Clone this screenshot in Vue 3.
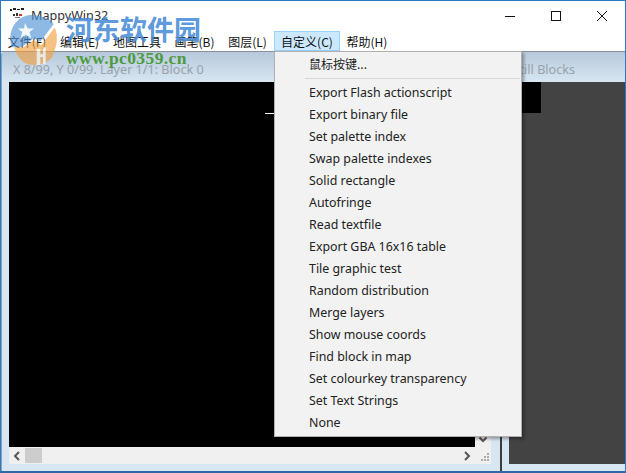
<script setup>
const menus = [
  { label: '文件(F)', w: 52 },
  { label: '编辑(E)', w: 53 },
  { label: '地图工具', w: 62 },
  { label: '画笔(B)', w: 53 },
  { label: '图层(L)', w: 53 },
  { label: '自定义(C)', w: 66, active: true },
  { label: '帮助(H)', w: 54 }
]
const items = ['Export Flash actionscript','Export binary file','Set palette index','Swap palette indexes','Solid rectangle','Autofringe','Read textfile','Export GBA 16x16 table','Tile graphic test','Random distribution','Merge layers','Show mouse coords','Find block in map','Set colourkey transparency','Set Text Strings','None']
</script>

<template>
  <div class="win">
    <div class="titlebar">
      <svg class="appicon" width="16" height="16" viewBox="0 0 16 16"><path d="M0 1h2v2H0zM3 0h3v2H3zM7 1h3v1H7zM11 0h3v2h-3z" fill="#222"/><path d="M3 6h2v2H3zM6 5h2v3H6z" fill="#333"/><path d="M9 6h3v2H9z" fill="#c33"/><path d="M5 9h5v1H5z" fill="#777"/></svg>
      <span class="title">MappyWin32</span>
      <div class="caption">
        <svg class="capbtn" viewBox="0 0 46 30"><path d="M18 15.5h10" stroke="#111" fill="none"/></svg>
        <svg class="capbtn" viewBox="0 0 46 30"><rect x="18.5" y="10.5" width="9" height="9" stroke="#111" fill="none"/></svg>
        <svg class="capbtn" viewBox="0 0 46 30"><path d="M18 10l10 10M28 10L18 20" stroke="#111" fill="none"/></svg>
      </div>
    </div>
    <div class="menubar">
      <div v-for="m in menus" :key="m.label" class="mi" :class="{ active: m.active }" :style="{ width: m.w + 'px' }">{{ m.label }}</div>
    </div>
    <div class="client">
      <div class="mdi left">
        <div class="mdihead">X 8/99, Y 0/99. Layer 1/1: Block 0</div>
        <div class="canvas">
          <div class="canvasbody"><div class="cursor"></div></div>
          <div class="vscroll"><svg width="10" height="8" viewBox="0 0 10 8"><path d="M1.5 1.5L5 5l3.5-3.5" stroke="#555" stroke-width="2" fill="none"/></svg></div>
        </div>
        <div class="hscroll">
          <svg width="16" height="16" viewBox="0 0 16 16"><path d="M10 4L6 8l4 4" stroke="#555" stroke-width="2" fill="none"/></svg>
          <div class="thumb"></div>
          <div class="spacer"></div>
          <svg width="16" height="16" viewBox="0 0 16 16"><path d="M6 4l4 4-4 4" stroke="#555" stroke-width="2" fill="none"/></svg>
          <svg class="grip" width="16" height="16" viewBox="0 0 16 16"><path d="M12 5h2v2h-2zM9 8h2v2H9zM12 8h2v2h-2zM6 11h2v2H6zM9 11h2v2H9zM12 11h2v2h-2z" fill="#aaa"/></svg>
        </div>
      </div>
      <div class="mdi right">
        <div class="mdihead rhead"><span>Still Blocks</span></div>
        <div class="graypane"><div class="tile"></div></div>
      </div>
    </div>
    <div class="dropdown">
      <div class="dditem cjk">鼠标按键...</div>
      <div class="sep"></div>
      <div v-for="i in items" :key="i" class="dditem">{{ i }}</div>
    </div>
    <div class="watermark">
      <svg class="wmlogo" width="54" height="50" viewBox="0 0 60 56" preserveAspectRatio="none">
        <path d="M26 0C38 0 47 4 52 10L37 30 30 26 16 36 5 36C0 18 10 1 26 0z" fill="#4e92d6" opacity=".85"/>
        <path d="M20 9l3 6 7 0-5 4 2 7-6-4-6 4 2-7-5-4 7 0z" fill="#fff" opacity=".9"/>
        <path d="M8 36l10 0 12-8 8 6 15-20c3 6 3 16 1 22l-4 12C46 53 38 56 30 56 18 56 11 47 8 36z" fill="#f0a040" opacity=".85"/>
        <path d="M33 38h4v18h-4zM40 36h3v19h-3zM36 44h6v3h-6z" fill="#fff" opacity=".85"/>
      </svg>
      <div class="wmcn">河东软件园</div>
      <div class="wmurl">www.pc0359.cn</div>
    </div>
  </div>
</template>

<style>
html, body { margin: 0; padding: 0; overflow: hidden; }
</style>

<style scoped>
.win { position: relative; width: 626px; height: 473px; box-sizing: border-box; border: 1px solid #2b79c2; border-bottom: 2px solid #2b6ca8; background: #cfe2f3; font-family: "Noto Sans", "Noto Sans CJK SC", sans-serif; display: flex; flex-direction: column; overflow: hidden; }
.titlebar { height: 29px; background: #fff; display: flex; align-items: center; flex: none; }
.appicon { margin-left: 9px; margin-top: 1px; }
.title { margin-left: 5px; font-size: 12.6px; color: #333; }
.caption { margin-left: auto; display: flex; }
.capbtn { width: 46px; height: 30px; }
.menubar { height: 21px; background: #fff; display: flex; font: 12px "Noto Sans CJK SC", sans-serif; border-bottom: 1px solid #8a9097; flex: none; color: #111; }
.mi { display: flex; align-items: center; justify-content: center; box-sizing: border-box; margin-top: 1px; }
.mi.active { background: #cce8ff; border: 1px solid #99d1ff; }
.client { flex: 1; display: flex; min-height: 0; background: #d9e8f5; }
.mdi { display: flex; flex-direction: column; min-height: 0; background: linear-gradient(#b6c9db, #d8e6f2 30px); }
.left { width: 500px; padding: 0 9px 0 7px; box-sizing: border-box; border-right: 1px solid #3c3c3c; border-left: 1px solid #8fa3b5; border-top-left-radius: 4px; }
.right { flex: 1; padding-left: 7px; border-left: 1px solid #3c3c3c; }
.mdihead { height: 30px; font-size: 12.6px; color: #98a2ab; line-height: 36px; white-space: nowrap; padding-left: 4px; flex: none; }
.rhead { padding: 0; text-align: right; padding-right: 50px; }
.canvas { flex: 1; display: flex; min-height: 0; }
.canvasbody { flex: 1; background: #000; position: relative; }
.cursor { position: absolute; left: 256px; top: 31px; width: 10px; height: 1px; background: #fff; }
.vscroll { width: 16px; background: #f0f0f0; display: flex; align-items: flex-end; justify-content: center; padding-bottom: 3px; box-sizing: border-box; }
.hscroll { height: 17px; background: #f0f0f0; display: flex; align-items: center; flex: none; margin-bottom: 7px; }
.thumb { width: 17px; height: 15px; background: #cdcdcd; }
.spacer { flex: 1; }
.graypane { flex: 1; background: #434343; margin-bottom: 7px; }
.tile { width: 32px; height: 31px; background: #000; }
.dropdown { position: absolute; left: 273px; top: 50px; width: 248px; height: 386px; box-sizing: border-box; background: #f2f2f2; border: 1px solid #b0b0b0; box-shadow: 2px 2px 3px rgba(0,0,0,.35); padding-top: 1px; font-size: 12.4px; color: #222; }
.dditem { height: 22px; line-height: 22px; padding-left: 34px; white-space: nowrap; }
.cjk { font-family: "Noto Sans CJK SC", sans-serif; font-size: 12px; }
.sep { height: 1px; background: #d7d7d7; margin: 3px 1px 3px 30px; }
.watermark { position: absolute; left: -1px; top: -1px; pointer-events: none; }
.wmlogo { position: absolute; left: 7px; top: 15px; opacity: .75; }
.wmcn { position: absolute; left: 66px; top: 9px; font: bold 27px "Noto Sans CJK SC", sans-serif; color: rgba(72,140,215,.9); white-space: nowrap; }
.wmurl { position: absolute; left: 66px; top: 48px; font: bold 17.5px "Liberation Serif", serif; color: #4d9a3f; white-space: nowrap; letter-spacing: .4px; }
</style>
